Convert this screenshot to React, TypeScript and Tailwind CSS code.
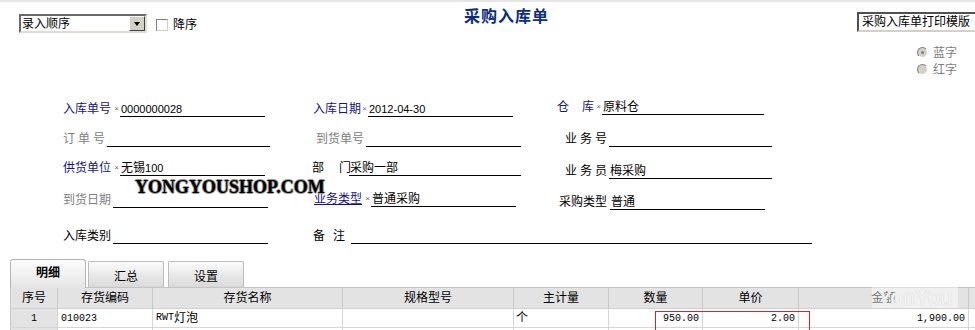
import React from "react";

// form label tones
const BLUE = "text-[#12128a]";
const GRAY = "text-[#808080]";
const BLACK = "text-black";

const N = ({ c }: { c: string }) => <span className="text-[11px]">{c}</span>;

interface FieldProps {
  label: React.ReactNode;
  tone: string;
  box: string;
  line: string;
  star?: boolean;
  value?: React.ReactNode;
  shift?: string;
  wide?: boolean;
}

const Field = ({ label, tone, box, line, star, value, shift = "", wide }: FieldProps) => (
  <div className={`flex items-end ${shift} ${wide ? "col-span-2" : ""}`}>
    <div className={`flex justify-between h-[15px] shrink-0 ${box}`}>
      <span className={`leading-[14px] whitespace-nowrap ${tone}`}>{label}</span>
      {star && <span className="text-[8px] leading-[8px] text-[#666] mt-[3px] mr-[1px]">×</span>}
    </div>
    <div className={`h-[15px] shrink-0 border-b border-black leading-[14px] pl-px whitespace-nowrap ${line}`}>
      {value}
    </div>
  </div>
);

const rows: { h: string; fields: FieldProps[] }[] = [
  {
    h: "h-[39px]",
    fields: [
      { label: "入库单号", tone: BLUE, box: "w-[57px]", star: true, line: "w-[145px]", value: <N c="0000000028" /> },
      { label: "入库日期", tone: BLUE, box: "ml-[1px] w-[55px]", star: true, line: "w-[145px]", value: <N c="2012-04-30" /> },
      { label: <>仓<span className="ml-[13px]">库</span></>, tone: BLUE, box: "w-[45px]", star: true, line: "w-[162px]", value: "原料仓", shift: "mb-[2px]" },
    ],
  },
  {
    h: "h-[30px]",
    fields: [
      { label: "订单号", tone: `${GRAY} tracking-[3px]`, box: "w-[44px]", line: "w-[163px]" },
      { label: "到货单号", tone: GRAY, box: "ml-[4px] w-[50px]", line: "w-[155px]" },
      { label: "业务号", tone: `${BLACK} tracking-[3px]`, box: "ml-[8px] w-[44px]", line: "w-[163px]" },
    ],
  },
  {
    h: "h-[29px]",
    fields: [
      { label: "供货单位", tone: BLUE, box: "w-[57px]", star: true, line: "w-[145px]", value: <>无锡<N c="100" /></> },
      { label: <>部<span className="ml-[15px]">门</span></>, tone: BLACK, box: "w-[37px]", line: "w-[172px]", value: "采购一部" },
      { label: "业务员", tone: `${BLACK} tracking-[3px]`, box: "ml-[8px] w-[44px]", line: "w-[163px]", value: "梅采购", shift: "-mb-[3px]" },
    ],
  },
  {
    h: "h-[32px]",
    fields: [
      { label: "到货日期", tone: GRAY, box: "w-[50px]", line: "w-[155px]" },
      { label: "业务类型", tone: `${BLUE} underline`, box: "ml-[2px] w-[57px]", star: true, line: "w-[145px]", value: "普通采购", shift: "mb-[1px]" },
      { label: "采购类型", tone: BLACK, box: "ml-[2px] w-[51px]", line: "w-[155px]", value: "普通", shift: "-mb-[2px]" },
    ],
  },
  {
    h: "h-[36px]",
    fields: [
      { label: "入库类别", tone: BLACK, box: "w-[50px]", line: "w-[155px]" },
      { label: <>备<span className="ml-[8px]">注</span></>, tone: BLACK, box: "ml-[1px] w-[38px]", line: "w-[461px]", wide: true },
    ],
  },
];

const cols = ["序号", "存货编码", "存货名称", "规格型号", "主计量", "数量", "单价", "金额", ""];
const GRID = "grid grid-cols-[47px_95px_190px_171px_95px_94px_96px_170px_60px]";
const MONO = "font-['Liberation_Mono',monospace] text-[10px]";

const Radio = ({ label, checked }: { label: string; checked?: boolean }) => (
  <div className="h-[17px] flex items-center">
    <span className="w-[11px] h-[11px] rounded-full border border-t-[#808080] border-l-[#808080] border-b-white border-r-white bg-[#d4d0c8] flex items-center justify-center">
      {checked && <span className="w-[3px] h-[3px] rounded-full bg-[#808080]" />}
    </span>
    <span className={`ml-[5px] leading-[14px] ${GRAY}`}>{label}</span>
  </div>
);

export default function App() {
  return (
    <div className="relative w-[975px] h-[330px] overflow-hidden bg-white text-[12px] text-black font-['Liberation_Sans','Noto_Sans_CJK_SC',sans-serif]">
      <div className="h-[2px] bg-[#e6e6e6]" />

      {/* toolbar */}
      <div className="flex items-start h-[42px]">
        <div className="w-[464px] shrink-0 flex items-start">
          <div className="ml-[19px] mt-[12px] w-[128px] h-[19px] flex items-center border-2 border-t-[#6a6a6a] border-l-[#6a6a6a] border-b-[#e0ddd6] border-r-[#e0ddd6] bg-white">
            <span className="flex-1 pl-[1px] leading-[14px]">录入顺序</span>
            <span className="w-[16px] h-[15px] bg-[#d4d0c8] border border-t-white border-l-white border-b-[#404040] border-r-[#404040] flex items-center justify-center">
              <span className="w-0 h-0 border-l-[3.5px] border-r-[3.5px] border-t-[4px] border-l-transparent border-r-transparent border-t-black" />
            </span>
          </div>
          <div className="ml-[9px] mt-[16px] flex items-center">
            <span className="w-[12px] h-[12px] bg-white border border-t-[#808080] border-l-[#808080] border-b-[#d4d0c8] border-r-[#d4d0c8]" />
            <span className="ml-[5px] leading-[14px]">降序</span>
          </div>
        </div>
        <div className="w-[393px] shrink-0 mt-[5px] text-[16px] leading-[20px] font-bold tracking-[1px] text-[#0b2f7e]">
          采购入库单
        </div>
        <div className="w-[130px] shrink-0 mt-[10px] h-[20px] border-2 border-t-[#505050] border-l-[#505050] border-b-[#d4d0c8] border-r-[#d4d0c8] pl-[3px] leading-[16px] whitespace-nowrap">
          采购入库单打印模版
        </div>
      </div>

      {/* blue / red radios */}
      <div className="ml-[917px] flex flex-col">
        <Radio label="蓝字" checked />
        <Radio label="红字" />
      </div>

      {/* header form */}
      <div className="relative flex flex-col">
        {rows.map((r, i) => (
          <div key={i} className={`grid grid-cols-[249px_245px_1fr] items-end pl-[63px] ${r.h}`}>
            {r.fields.map((f, j) => (
              <Field key={j} {...f} />
            ))}
          </div>
        ))}
        <div className="absolute left-[135px] top-[99px] text-[18px] leading-[20px] font-bold font-['Liberation_Serif',serif] text-black [text-shadow:1px_0_0_#999,-1px_0_0_#999,0_1px_0_#999,0_-1px_0_#999]">
          YONGYOUSHOP.COM
        </div>
      </div>

      {/* tabs */}
      <div className="mt-[15px] flex items-end h-[29px] pl-[10px]">
        <div className="w-[76px] h-[29px] shrink-0 border border-b-0 border-[#b4b4b4] rounded-t-[3px] bg-linear-to-b from-[#fdfdfd] to-[#e6e6e6] flex justify-center pt-[6px] leading-[14px] font-bold">
          明细
        </div>
        <div className="flex-1 h-full flex items-end border-b border-[#c4c4c4]">
          <div className="ml-[2px] w-[76px] h-[26px] border border-b-0 border-[#bcbcbc] rounded-t-[2px] bg-linear-to-b from-[#fbfbfb] to-[#d9d9d9] flex justify-center pt-[8px] leading-[14px]">
            汇总
          </div>
          <div className="ml-[4px] w-[76px] h-[26px] border border-b-0 border-[#bcbcbc] rounded-t-[2px] bg-linear-to-b from-[#fbfbfb] to-[#d9d9d9] flex justify-center pt-[8px] leading-[14px]">
            设置
          </div>
        </div>
      </div>

      {/* detail grid */}
      <div className="relative ml-[10px]">
        <div className={`${GRID} h-[21px] bg-[#e3e3e3] border-b border-[#d0d0d0]`}>
          {cols.map((c, i) => (
            <div key={i} className="border-l border-[#c8c8c8] flex items-center justify-center leading-[14px]">
              {c}
            </div>
          ))}
        </div>
        <div className={`${GRID} h-[19px] border-b border-[#d6d6d6]`}>
          <div className={`border-l border-[#c8c8c8] bg-[#e3e3e3] flex items-center justify-center ${MONO}`}>1</div>
          <div className={`border-l border-[#d6d6d6] flex items-center pl-[3px] ${MONO}`}>010023</div>
          <div className="border-l border-[#d6d6d6] flex items-center pl-[3px] leading-[14px]">
            <span className={MONO}>RWT</span>灯泡
          </div>
          <div className="border-l border-[#d6d6d6]" />
          <div className="border-l border-[#d6d6d6] flex items-center pl-[2px] leading-[14px]">个</div>
          <div className={`border-l border-[#d6d6d6] flex items-center justify-end pr-[3px] ${MONO}`}>950.00</div>
          <div className={`border-l border-[#d6d6d6] flex items-center justify-end pr-[3px] ${MONO}`}>2.00</div>
          <div className={`border-l border-[#d6d6d6] flex items-center justify-end pr-[3px] ${MONO}`}>1,900.00</div>
          <div className="border-l border-[#d6d6d6]" />
        </div>
        <div className={`${GRID} h-[19px]`}>
          <div className="border-l border-[#c8c8c8] bg-[#e3e3e3]" />
          {cols.slice(1).map((_, i) => (
            <div key={i} className="border-l border-[#d6d6d6]" />
          ))}
        </div>

        {/* highlighted qty / price */}
        <div className="absolute left-[645px] top-[23px] w-[155px] h-[25px] border border-[#ee1c1c]" />
        {/* vendor watermark */}
        <div className="absolute left-[862px] top-[-1px] w-[86px] h-[21px] bg-white/45 flex items-center justify-center text-[22px] leading-[20px] text-[#f2f2f2] [text-shadow:0_0_1px_#cfcfcf]">
          YonYou
        </div>
      </div>
    </div>
  );
}
